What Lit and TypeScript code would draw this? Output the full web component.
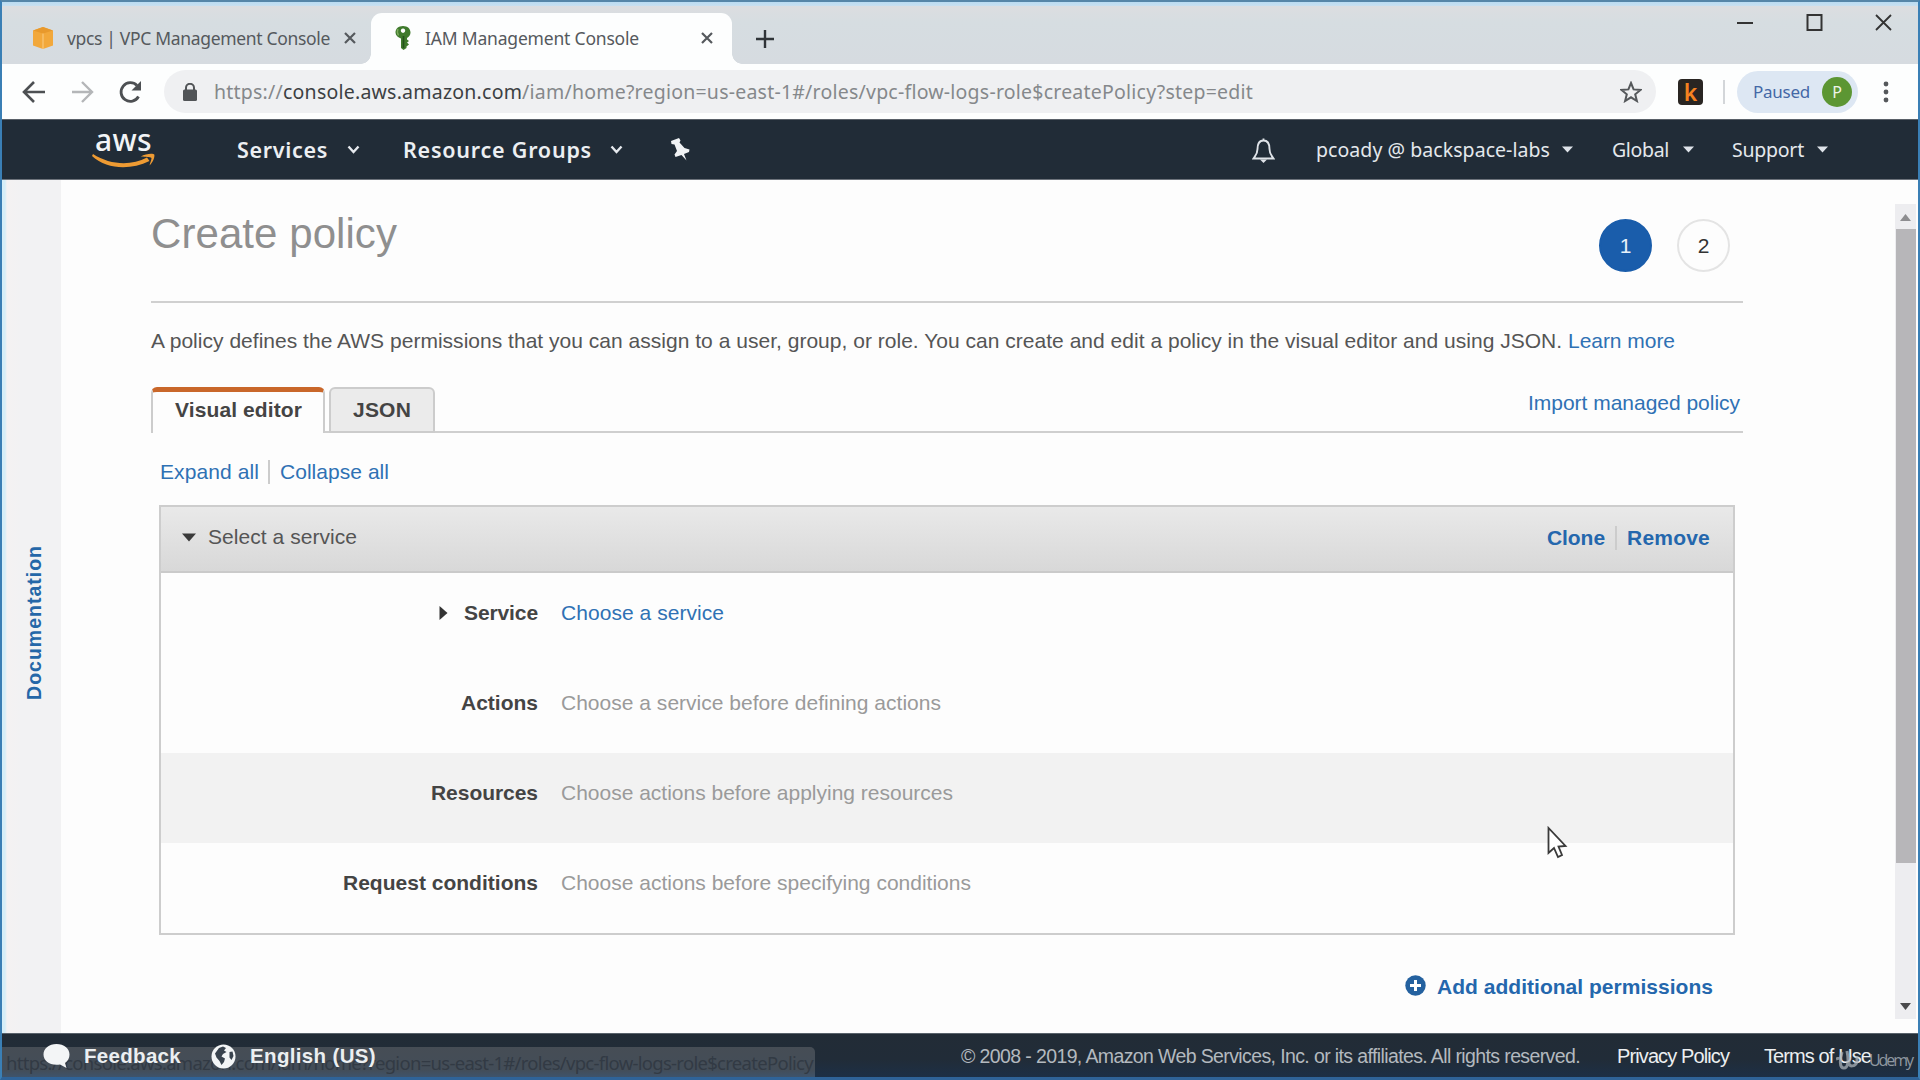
import { LitElement, html, css } from "lit";
import { customElement, property } from "lit/decorators.js";

/** Inline text whose tracking is adjusted so that the run is `w` pixels wide. */
@customElement("fit-text")
class FitText extends LitElement {
  @property({ type: Number }) w = 0;
  static styles = css`
    :host { display: inline-block; flex: none; white-space: pre; }
  `;
  firstUpdated() {
    const n = (this.textContent || "").length;
    if (!this.w || !n) return;
    const natural = this.getBoundingClientRect().width;
    this.style.letterSpacing = `${(this.w - natural) / n}px`;
  }
  render() {
    return html`<slot></slot>`;
  }
}

const closeIcon = html`<svg width="14" height="14" viewBox="0 0 14 14"><path d="M2 2L12 12M12 2L2 12" stroke="currentColor" stroke-width="2.2" fill="none"/></svg>`;
const chevron = html`<svg width="13" height="9" viewBox="0 0 13 9"><path d="M1.5 1.5L6.5 7L11.5 1.5" stroke="#e6eaee" stroke-width="2.4" fill="none"/></svg>`;
const caret = html`<svg width="11" height="7" viewBox="0 0 11 7"><path d="M0 .5H11L5.5 6.5Z" fill="#dfe4ea"/></svg>`;

@customElement("browser-bar")
class BrowserBar extends LitElement {
  static styles = css`
    :host { display: block; flex: none; font-family: "Noto Sans", "Open Sans", sans-serif; color: #55595d; }
    svg { display: block; flex: none; }
    .strip { display: flex; height: 64px; background: linear-gradient(#dedde0, #d6dde1 35%, #d6dbe0); align-items: flex-end; }
    .tab { display: flex; align-items: center; height: 51px; box-sizing: border-box; font-size: 17.5px; flex: none; padding-bottom: 1px; }
    .first { width: 371px; padding-left: 32px; }
    .first fit-text { margin: 0 13px 0 13px; }
    .active { width: 361px; padding-left: 24px; background: #fdfefe; border-radius: 11px 11px 0 0; position: relative; }
    .active::before, .active::after { content: ""; position: absolute; bottom: 0; width: 10px; height: 10px; }
    .active::before { left: -10px; background: radial-gradient(circle at 0 0, transparent 9.5px, #fdfefe 10px); }
    .active::after { right: -10px; background: radial-gradient(circle at 100% 0, transparent 9.5px, #fdfefe 10px); }
    .active fit-text { margin: 0 61px 0 14px; }
    .plus { margin: 0 0 15px 23px; }
    .win { display: flex; align-self: flex-start; margin: 14px 28px 0 auto; gap: 52px; }
    .bar { display: flex; align-items: center; height: 55px; background: #fdfefe; padding-left: 22px; }
    .fwd { margin-left: 26px; }
    .reload { margin-left: 24px; }
    .omni { display: flex; align-items: center; box-sizing: border-box; width: 1492px; height: 43px; margin-left: 21px; border-radius: 22px; background: #eff0f2; padding: 0 14px 0 19px; font-size: 19.5px; color: #85888b; }
    .omni fit-text { margin-left: 17px; }
    .omni .star { margin-left: auto; }
    .host { color: #3c4043; }
    .ext { display: grid; place-items: center; width: 25px; height: 26px; border-radius: 4px; background: #292522; color: #f58220; font-size: 23px; font-weight: 600; line-height: 22px; margin-left: 22px; }
    .rule { width: 2px; height: 24px; background: #d3d6d9; margin-left: 20px; }
    .paused { display: flex; align-items: center; box-sizing: border-box; height: 42px; width: 121px; border-radius: 21px; background: #dde7f3; margin-left: 12px; padding-left: 16px; gap: 12px; font-size: 17px; color: #4468a6; }
    .avatar { display: grid; place-items: center; width: 30px; height: 30px; border-radius: 50%; background: #5c9633; color: #eef4e8; font-size: 16px; }
    .dots { margin-left: 25px; }
  `;
  render() {
    return html`
      <div class="strip">
        <div class="tab first">
          <svg width="22" height="22" viewBox="0 0 22 22"><path d="M11 0L21 3.5V18.500L11 22L1 18.500V3.500Z" fill="#f2a83b"/><path d="M1 3.500L11 6.500L21 3.500L11 0Z" fill="#e8992c"/><path d="M11 6.500V22" stroke="#f8c679" stroke-width="1.200" fill="none"/></svg>
          <fit-text w="263">vpcs | VPC Management Console</fit-text>${closeIcon}
        </div>
        <div class="tab active">
          <svg width="16" height="24" viewBox="0 0 16 24"><path fill-rule="evenodd" fill="#3f7a2c" d="M8 0C12.500 0 15.500 2.800 15.500 6.500C15.500 9 14 11 12 12V13.500L14 15L12 16.500L14 18.500L11.500 20.500V22L8.500 24L6 22V12.500C3 11.500 .5 9.500 .5 6.500C.5 2.800 3.500 0 8 0ZM8 2.500A2.200 2.200 0 1 0 8.010 2.500Z"/><path d="M8.500 10V22" stroke="#24521b" stroke-width="1.600"/><path d="M3 3Q1.500 6 3.500 9.500" stroke="#7cab5d" stroke-width="1.400" fill="none"/></svg>
          <fit-text w="214">IAM Management Console</fit-text>${closeIcon}
        </div>
        <svg class="plus" width="20" height="20" viewBox="0 0 20 20"><path d="M10 1V19M1 10H19" stroke="#303438" stroke-width="2.400"/></svg>
        <div class="win">
          <svg width="17" height="17" viewBox="0 0 17 17"><path d="M0 9H16" stroke="#333" stroke-width="2"/></svg>
          <svg width="17" height="17" viewBox="0 0 17 17"><rect x="1.500" y="1" width="14" height="15" fill="none" stroke="#333" stroke-width="2"/></svg>
          <svg width="17" height="17" viewBox="0 0 17 17"><path d="M1 1L16 16M16 1L1 16" stroke="#333" stroke-width="1.800"/></svg>
        </div>
      </div>
      <div class="bar">
        <svg width="24" height="24" viewBox="0 0 24 24"><path d="M23 12H3M12 2L2 12L12 22" fill="none" stroke="#4d5053" stroke-width="2.600"/></svg>
        <svg class="fwd" width="22" height="24" viewBox="0 0 22 24"><path d="M0 12H20M10 2L20 12L10 22" fill="none" stroke="#b4b6b8" stroke-width="2.400"/></svg>
        <svg class="reload" width="25" height="24" viewBox="0 0 25 24"><path d="M20.500 16.500A9.300 9.300 0 1 1 19 5.500" fill="none" stroke="#4d5053" stroke-width="2.800"/><path d="M23 1V10.500H13.500Z" fill="#4d5053"/></svg>
        <div class="omni">
          <svg width="14" height="18" viewBox="0 0 14 18"><rect y="6.500" width="14" height="11.500" rx="1.500" fill="#515457"/><path d="M3 7V4.800A4 4 0 0 1 11 4.800V7" fill="none" stroke="#515457" stroke-width="2"/></svg>
          <fit-text w="1039">https://<span class="host">console.aws.amazon.com</span>/iam/home?region=us-east-1#/roles/vpc-flow-logs-role$createPolicy?step=edit</fit-text>
          <svg class="star" width="22" height="22" viewBox="0 0 22 22"><path d="M11 2L13.600 8.400L20.500 8.900L15.200 13.300L16.900 20L11 16.300L5.100 20L6.800 13.300L1.500 8.900L8.400 8.400Z" fill="none" stroke="#55585b" stroke-width="2"/></svg>
        </div>
        <div class="ext">k</div>
        <div class="rule"></div>
        <div class="paused"><fit-text w="57">Paused</fit-text><span class="avatar">P</span></div>
        <svg class="dots" width="6" height="22" viewBox="0 0 6 22"><g fill="#55585b"><circle cx="3" cy="3" r="2.400"/><circle cx="3" cy="11" r="2.400"/><circle cx="3" cy="19" r="2.400"/></g></svg>
      </div>
    `;
  }
}

@customElement("aws-nav")
class AwsNav extends LitElement {
  static styles = css`
    :host { display: flex; flex: none; align-items: center; height: 61px; box-sizing: border-box; background: #212c37; border-top: 1px solid #596068; border-bottom: 1px solid #6d737b; padding-left: 92px; font-family: "Noto Sans", "Open Sans", sans-serif; color: #e4e8ec; font-size: 19.5px; }
    svg { display: block; flex: none; }
    .logo { width: 63px; display: flex; flex-direction: column; align-items: center; padding-bottom: 3px; }
    .logo fit-text { font-size: 30px; line-height: 24px; height: 25px; font-weight: 500; color: #f2f4f6; }
    .main { font-weight: 600; font-size: 21.5px; color: #eceff2; padding-bottom: 1px; }
    .services { margin: 0 19px 0 82px; }
    .groups { margin: 0 18px 0 43px; }
    .pin { margin-left: 47px; }
    .bell { margin-left: 562px; }
    .user { margin: 0 12px 0 41px; }
    .global { margin: 0 14px 0 39px; }
    .support { margin: 0 13px 0 38px; }
  `;
  render() {
    return html`
      <div class="logo"><fit-text w="57">aws</fit-text>
        <svg width="63" height="15" viewBox="0 0 63 15"><path d="M1 1C18 12 39 13 55 4.500L57.500 8C38 17.500 15 16.500 0 3Z" fill="#ee9b33"/><path d="M49 3.500C53 .5 61.500 0 62.300 1.500C63 4 61 9.500 57.500 12.500C58.500 9 60 5.500 59.300 4.800C58 3.800 54 4.200 49 3.500Z" fill="#ee9b33"/></svg>
      </div>
      <fit-text class="main services" w="91">Services</fit-text>${chevron}
      <fit-text class="main groups" w="189">Resource Groups</fit-text>${chevron}
      <svg class="pin" width="20" height="23" viewBox="0 0 20 23"><path d="M1 3L9 0L10.500 2.500L9.500 4.500L14.500 10L19.500 11.500L19 14L14 16L16.500 22.500L11.500 17L5.500 19L4.500 16.500L7 13L4.500 6.500L1.500 6Z" fill="#f1f3f5"/></svg>
      <svg class="bell" width="23" height="26" viewBox="0 0 23 26"><path d="M11.500 1.500V3.500M11.500 3.500C6.500 3.500 5.500 8 5.500 12C5.500 17 3.500 18.500 1.500 21.500H21.500C19.500 18.500 17.500 17 17.500 12C17.500 8 16.500 3.500 11.500 3.500Z" fill="none" stroke="#dfe3e8" stroke-width="1.900"/><path d="M8 22.500H15L11.500 26Z" fill="#dfe3e8"/></svg>
      <fit-text class="user" w="234">pcoady @ backspace-labs</fit-text>${caret}
      <fit-text class="global" w="57">Global</fit-text>${caret}
      <fit-text class="support" w="72">Support</fit-text>${caret}
    `;
  }
}

const ROWS = [
  { label: "Service", lw: 74, value: "Choose a service", vw: 163, link: true, shaded: false },
  { label: "Actions", lw: 77, value: "Choose a service before defining actions", vw: 380, link: false, shaded: false },
  { label: "Resources", lw: 107, value: "Choose actions before applying resources", vw: 392, link: false, shaded: true },
  { label: "Request conditions", lw: 195, value: "Choose actions before specifying conditions", vw: 410, link: false, shaded: false },
];

@customElement("policy-editor")
class PolicyEditor extends LitElement {
  static styles = css`
    :host { display: block; width: 1592px; flex: none; margin-left: 90px; color: #555; font-size: 21px; line-height: 26px; }
    svg { display: block; flex: none; }
    .head { display: flex; justify-content: space-between; height: 123px; box-sizing: border-box; border-bottom: 2px solid #d0d0d0; }
    .title { margin: 31px 0 0; font-weight: 400; font-size: 42px; line-height: 46px; color: #8f8f8f; }
    .steps { display: flex; gap: 25px; margin: 39px 13px 0 0; }
    .step { display: grid; place-items: center; box-sizing: border-box; width: 53px; height: 53px; border-radius: 50%; border: 2px solid #e4e4e4; color: #333; }
    .step.on { background: #1a5dab; border-color: #1a5dab; color: #e8f1fa; }
    .link { color: #2f71b4; }
    .strong { color: #2467ad; font-weight: 700; }
    .intro { margin-top: 25px; display: flex; }
    .tabs { display: flex; margin-top: 33px; height: 46px; box-sizing: border-box; border-bottom: 2px solid #cfcfcf; }
    .tab { display: flex; justify-content: center; align-items: center; box-sizing: border-box; height: 46px; font-weight: 700; color: #444; border: 2px solid #ccc; border-radius: 6px 6px 0 0; }
    .tab.on { width: 174px; border-top: 5px solid #c9672a; border-bottom: none; background: #fdfdfd; padding: 0 0 5px 1px; }
    .tab.off { width: 106px; margin-left: 4px; background: #ebebeb; padding-bottom: 1px; }
    .import { margin: 3px 3px 0 auto; }
    .toggles { display: flex; align-items: center; margin: 26px 0 0 9px; }
    .sep { width: 2px; height: 24px; background: #ccc; margin: 0 10px; }
    .toggles .sep { margin: 0 10px 0 9px; }
    .panel { margin: 20px 8px 0; border: 2px solid #cdcdcd; }
    .phead { display: flex; align-items: center; box-sizing: border-box; height: 66px; padding: 0 23px 3px 21px; background: linear-gradient(#e9e9e9, #d8d8d8); border-bottom: 2px solid #cacaca; }
    .phead .name { margin: 0 auto 0 12px; padding-bottom: 1px; }
    .row { display: grid; grid-template-columns: 377px 1fr; column-gap: 23px; align-items: center; height: 90px; box-sizing: border-box; padding-bottom: 10px; }
    .row.shaded { background: #f2f2f2; }
    .label { display: flex; align-items: center; justify-content: flex-end; gap: 16px; font-weight: 700; color: #444; }
    .value { color: #9a9a9a; }
    .value.link { color: #2f71b4; }
    .add { display: flex; justify-content: flex-end; align-items: center; margin: 39px 30px 0 0; gap: 11px; }
    .add svg { margin-bottom: 3px; }
  `;
  render() {
    return html`
      <div class="head">
        <h1 class="title"><fit-text w="246">Create policy</fit-text></h1>
        <div class="steps"><span class="step on">1</span><span class="step">2</span></div>
      </div>
      <div class="intro">
        <fit-text w="1417">A policy defines the AWS permissions that you can assign to a user, group, or role. You can create and edit a policy in the visual editor and using JSON. </fit-text><fit-text class="link" w="107">Learn more</fit-text>
      </div>
      <div class="tabs">
        <div class="tab on"><fit-text w="127">Visual editor</fit-text></div>
        <div class="tab off"><fit-text w="58">JSON</fit-text></div>
        <fit-text class="link import" w="212">Import managed policy</fit-text>
      </div>
      <div class="toggles">
        <fit-text class="link" w="99">Expand all</fit-text><span class="sep"></span><fit-text class="link" w="109">Collapse all</fit-text>
      </div>
      <div class="panel">
        <div class="phead">
          <svg width="14" height="9" viewBox="0 0 14 9"><path d="M0 .5H14L7 8.500Z" fill="#3a3a3a"/></svg>
          <fit-text class="name" w="149">Select a service</fit-text>
          <fit-text class="strong" w="58">Clone</fit-text><span class="sep"></span><fit-text class="strong" w="83">Remove</fit-text>
        </div>
        ${ROWS.map(
          (r) => html`<div class="row ${r.shaded ? "shaded" : ""}">
            <div class="label">
              ${r.link ? html`<svg width="9" height="14" viewBox="0 0 9 14"><path d="M.5 0V14L8.500 7Z" fill="#333"/></svg>` : ""}
              <fit-text w=${r.lw}>${r.label}</fit-text>
            </div>
            <div class="value ${r.link ? "link" : ""}"><fit-text w=${r.vw}>${r.value}</fit-text></div>
          </div>`
        )}
      </div>
      <div class="add">
        <svg width="21" height="21" viewBox="0 0 21 21"><circle cx="10.500" cy="10.500" r="10.200" fill="#24619f"/><path d="M10.500 5V16M5 10.500H16" stroke="#fff" stroke-width="3"/></svg>
        <fit-text class="strong" w="276">Add additional permissions</fit-text>
      </div>
    `;
  }
}

@customElement("aws-footer")
class AwsFooter extends LitElement {
  static styles = css`
    :host { display: flex; flex: none; align-items: center; box-sizing: border-box; height: 47px; padding: 0 0 2px 43px; background: linear-gradient(#222c36, #212c38 55%, #1c3048); border-top: 1px solid #59626b; position: relative; font-size: 20.5px; color: #eceff1; }
    svg { display: block; flex: none; }
    fit-text, svg { position: relative; }
    .status { position: absolute; left: 2px; bottom: 0; width: 813px; height: 33px; box-sizing: border-box; padding: 2px 0 0 4px; border-radius: 0 5px 0 0; background: linear-gradient(#464d55, #434d58 70%, #3c5673); font: 18.5px/27px "Noto Sans", sans-serif; color: #323a44; }
    .bold { font-weight: 700; }
    .feedback { margin: 0 30px 0 14px; }
    .lang { margin-left: 14px; }
    .copy { margin-left: auto; color: #b3b9bf; font-size: 19.500px; }
    .privacy { margin-left: 37px; font-size: 20px; }
    .terms { margin: 0 49px 0 35px; font-size: 20px; }
    .mark { position: absolute; right: 8px; bottom: 9px; display: flex; align-items: center; gap: 9px; font: 16px/22px "Open Sans", sans-serif; color: #8f98a1; }
  `;
  render() {
    return html`
      <div class="status"><fit-text w="807">https://console.aws.amazon.com/iam/home?region=us-east-1#/roles/vpc-flow-logs-role$createPolicy</fit-text></div>
      <svg width="27" height="26" viewBox="0 0 27 26"><path d="M13.500 1C21 1 26.500 5.500 26.500 11.500C26.500 15 25 18 22 20L23.500 25L17 21.500C7 23 .5 18 .5 11.500C.5 5.500 6 1 13.500 1Z" fill="#f3f5f6"/></svg>
      <fit-text class="bold feedback" w="97">Feedback</fit-text>
      <svg width="25" height="25" viewBox="0 0 25 25"><circle cx="12.500" cy="12.500" r="12" fill="#f3f5f6"/><path d="M8 4L12 2.500L15 4L13 6.500L15.500 8L12 10L10.500 12.500L14 14.500L13 18L10.500 21L8.500 17L5.500 13.500L4 9.500ZM18.500 8L21.500 7.500L22.500 12L20.500 16L18.500 13.500Z" fill="#39434e"/></svg>
      <fit-text class="bold lang" w="126">English (US)</fit-text>
      <fit-text class="copy" w="619">© 2008 - 2019, Amazon Web Services, Inc. or its affiliates. All rights reserved.</fit-text>
      <fit-text class="privacy" w="112">Privacy Policy</fit-text>
      <fit-text class="terms" w="107">Terms of Use</fit-text>
      <div class="mark">
        <svg width="24" height="22" viewBox="0 0 24 22"><path d="M0 10L6 8M6 3C4 10 3 19 8 19C12 19 13 12 11 2M13 8V14C13 18 19 18 21 13V7" fill="none" stroke="#aab1b8" stroke-opacity=".75" stroke-width="3"/></svg>
        <fit-text w="43">Udemy</fit-text>
      </div>
    `;
  }
}

@customElement("app-root")
class AppRoot extends LitElement {
  static styles = css`
    :host { display: block; width: 1920px; height: 1080px; overflow: hidden; position: relative; font-family: "Liberation Sans", Arial, sans-serif; }
    .window { display: flex; flex-direction: column; height: 1080px; }
    .body { display: flex; height: 853px; background: #fdfdfd; overflow: hidden; }
    .rail { width: 61px; flex: none; display: flex; align-items: center; justify-content: center; box-sizing: border-box; padding: 32px 0 0 8px; background: linear-gradient(90deg, #d5eef8 0 5px, #f4f2f2 7px, #f2f2f3 20px); }
    .doc { writing-mode: vertical-rl; transform: rotate(180deg); font-weight: 700; font-size: 19.500px; letter-spacing: 1px; color: #2567a8; }
    .scroll { display: flex; flex-direction: column; width: 21px; height: 815px; margin: 24px 4px 0 auto; background: #ededf0; flex: none; }
    .up { display: block; margin: 10px 5px 8px; }
    .thumb { height: 634px; background: #b7b6b9; margin-left: 1px; }
    .down { display: block; margin: auto 5px 9px; }
    .frame { position: absolute; inset: 0; pointer-events: none; border: 2px solid #3a7fb5; border-width: 2px 2px 3px; border-top-color: #5585a8; border-bottom-color: #2f6398; }
    .glow { position: absolute; left: 2px; right: 2px; top: 2px; height: 4px; background: linear-gradient(#b9dbf2, #c8dff0); }
    .cursor { position: absolute; left: 1546px; top: 826px; }
  `;
  render() {
    return html`
      <div class="window">
        <browser-bar></browser-bar>
        <aws-nav></aws-nav>
        <div class="body">
          <div class="rail"><span class="doc">Documentation</span></div>
          <policy-editor></policy-editor>
          <div class="scroll">
            <svg class="up" width="11" height="7" viewBox="0 0 11 7"><path d="M0 7H11L5.500 0Z" fill="#8d8d90"/></svg>
            <div class="thumb"></div>
            <svg class="down" width="11" height="7" viewBox="0 0 11 7"><path d="M0 0H11L5.500 7Z" fill="#4a4a4c"/></svg>
          </div>
        </div>
        <aws-footer></aws-footer>
      </div>
      <div class="glow"></div>
      <svg class="cursor" width="22" height="34" viewBox="0 0 22 34"><path d="M2.500 2V27L8 22L12 31L16 29L12.500 20.500L19.500 20Z" fill="#fff" stroke="#3a3a3a" stroke-width="1.800"/></svg>
      <div class="frame"></div>
    `;
  }
}
